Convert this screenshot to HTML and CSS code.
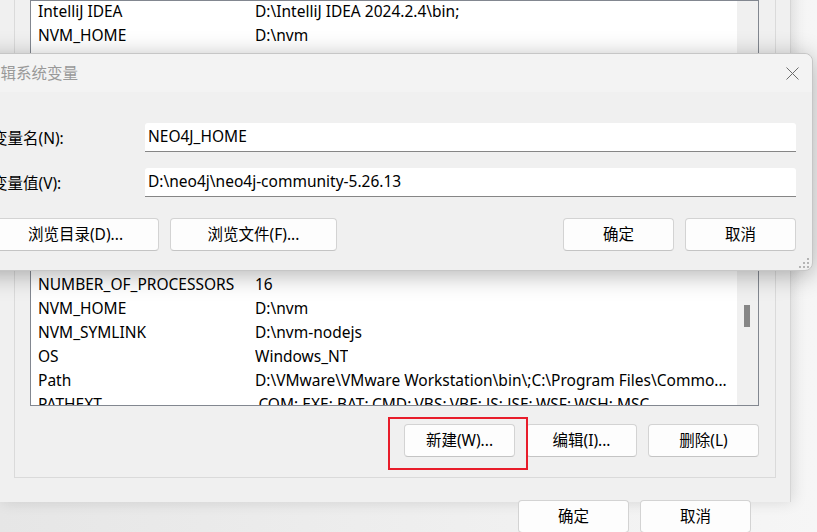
FILE: index.html
```html
<!DOCTYPE html>
<html lang="zh-CN">
<head>
    <meta charset="UTF-8">
    <meta name="viewport" content="width=device-width, initial-scale=1.0">
    <title>环境变量</title>
    <link rel="stylesheet" href="styles.css">
</head>
<body>
    <div class="desktop">
        <!-- Environment variables window (behind) -->
        <div class="envwin">
            <div class="group">
                <div class="varlist user">
                    <div class="rows">
                        <div class="row"><span class="name">IntelliJ IDEA</span><span class="value">D:\IntelliJ IDEA 2024.2.4\bin;</span></div>
                        <div class="row"><span class="name">NVM_HOME</span><span class="value">D:\nvm</span></div>
                        <div class="row"><span class="name">NVM_SYMLINK</span><span class="value">D:\nvm-nodejs</span></div>
                        <div class="row"><span class="name">OneDrive</span><span class="value">C:\Users\Administrator\OneDrive</span></div>
                        <div class="row"><span class="name">Path</span><span class="value">C:\Users\Administrator\AppData\Local\Microsoft\WindowsApps;</span></div>
                        <div class="row"><span class="name">TEMP</span><span class="value">C:\Users\Administrator\AppData\Local\Temp</span></div>
                    </div>
                    <div class="vscroll"></div>
                </div>

                <div class="varlist sys">
                    <div class="rows">
                        <div class="row"><span class="name">JAVA_HOME</span><span class="value">C:\Program Files\Java\jdk-17</span></div>
                        <div class="row"><span class="name">NEO4J_HOME</span><span class="value">D:\neo4j\neo4j-community-5.26.13</span></div>
                        <div class="row"><span class="name">NUMBER_OF_PROCESSORS</span><span class="value">16</span></div>
                        <div class="row"><span class="name">NVM_HOME</span><span class="value">D:\nvm</span></div>
                        <div class="row"><span class="name">NVM_SYMLINK</span><span class="value">D:\nvm-nodejs</span></div>
                        <div class="row"><span class="name">OS</span><span class="value">Windows_NT</span></div>
                        <div class="row"><span class="name">Path</span><span class="value">D:\VMware\VMware Workstation\bin\;C:\Program Files\Commo...</span></div>
                        <div class="row"><span class="name">PATHEXT</span><span class="value">.COM;.EXE;.BAT;.CMD;.VBS;.VBE;.JS;.JSE;.WSF;.WSH;.MSC</span></div>
                    </div>
                    <div class="vscroll"><div class="thumb"></div></div>
                </div>

                <div class="btnrow">
                    <button class="btn">新建(W)...</button>
                    <button class="btn">编辑(I)...</button>
                    <button class="btn">删除(L)</button>
                </div>
            </div>

            <div class="btnrow footer">
                <button class="btn">确定</button>
                <button class="btn">取消</button>
            </div>
        </div>

        <!-- red annotation box around the New button -->
        <div class="highlight"></div>

        <!-- Edit system variable dialog (on top) -->
        <div class="editdlg">
            <div class="titlebar">
                <span class="title">编辑系统变量</span>
                <span class="closebtn">
                    <svg width="13" height="13" viewBox="0 0 13 13">
                        <path d="M0.5 0.5 L12.5 12.5 M12.5 0.5 L0.5 12.5" stroke="#6b6b6b" stroke-width="1" fill="none"/>
                    </svg>
                </span>
            </div>
            <div class="dlgbody">
                <div class="field">
                    <label>变量名(N):</label>
                    <input class="input" value="NEO4J_HOME">
                </div>
                <div class="field">
                    <label>变量值(V):</label>
                    <input class="input" value="D:\neo4j\neo4j-community-5.26.13">
                </div>
                <div class="dlgbtns">
                    <button class="btn wide">浏览目录(D)...</button>
                    <button class="btn wide">浏览文件(F)...</button>
                    <button class="btn push">确定</button>
                    <button class="btn">取消</button>
                </div>
            </div>
            <svg class="grip" width="12" height="12" viewBox="0 0 12 12">
                <rect x="9" y="1" width="2" height="2" fill="#b4b4b4"/>
                <rect x="5" y="5" width="2" height="2" fill="#b4b4b4"/>
                <rect x="9" y="5" width="2" height="2" fill="#b4b4b4"/>
                <rect x="1" y="9" width="2" height="2" fill="#b4b4b4"/>
                <rect x="5" y="9" width="2" height="2" fill="#b4b4b4"/>
                <rect x="9" y="9" width="2" height="2" fill="#b4b4b4"/>
            </svg>
        </div>
    </div>
</body>
</html>
```

FILE: styles.css
```css
body {
    margin: 0;
    font-family: "Noto Sans", "Noto Sans CJK SC", sans-serif;
    font-size: 15.5px;
    color: #000;
    background: #f5f5f5;
}

.desktop {
    position: relative;
    width: 817px;
    height: 532px;
    overflow: hidden;
    background: linear-gradient(to right, #e6e6e6, #f6f6f6);
}

/* background window */
.envwin {
    width: 790px;
    height: 532px;
    background: #f0f0f0;
    border-right: 1px solid #d6d6d6;
    box-shadow: 2px 0 14px rgba(0, 0, 0, 0.12);
}

.group {
    width: 729px;
    margin: -30px 0 0 14px;
    padding: 29px 16px 20px 15px;
    border: 1px solid #dadada;
}

.varlist {
    display: flex;
    border: 1px solid #828790;
    background: #fff;
    overflow: hidden;
}

.varlist.user {
    height: 150px;
}

.varlist.sys {
    height: 179px;
    margin-top: 73px;
}

.rows {
    flex: 1;
    min-width: 0;
}

.row {
    display: flex;
    height: 24px;
    line-height: 20px;
    padding-left: 7px;
    white-space: nowrap;
}

.name {
    flex: none;
    width: 217px;
}

.value {
    overflow: hidden;
}

.vscroll {
    flex: none;
    width: 21px;
    background: #f0f0f0;
}

.thumb {
    width: 6px;
    height: 22px;
    margin: 79px 0 0 7px;
    background: #868686;
}

.btnrow {
    display: flex;
    justify-content: flex-end;
    gap: 11px;
    margin-top: 18px;
}

.btnrow.footer {
    margin-top: 22px;
    padding-right: 39px;
}

.btn {
    width: 111px;
    height: 33px;
    box-sizing: border-box;
    padding: 0 0 3px;
    background: #fdfdfd;
    border: 1px solid #d3d3d3;
    border-bottom-color: #c4c4c4;
    border-radius: 4px;
    font: inherit;
    color: #000;
}

.btn.wide {
    width: 167px;
}

.btn.push {
    margin-left: auto;
}

.highlight {
    position: absolute;
    left: 388px;
    top: 417px;
    width: 140px;
    height: 53px;
    box-sizing: border-box;
    border: 2px solid #e81c2a;
}

/* foreground dialog */
.editdlg {
    position: absolute;
    left: -30px;
    top: 53px;
    width: 843px;
    height: 218px;
    box-sizing: border-box;
    border: 1px solid #c6c6c6;
    border-radius: 8px;
    background: #f0f0f0;
    box-shadow: 0 4px 24px rgba(0, 0, 0, 0.3);
}

.titlebar {
    display: flex;
    align-items: center;
    height: 38px;
    padding-left: 14px;
    background: #f3f3f3;
    border-radius: 8px 8px 0 0;
    color: #999;
}

.title {
    flex: 1;
    padding-bottom: 2px;
}

.closebtn {
    display: flex;
    align-items: center;
    justify-content: center;
    width: 40px;
    height: 38px;
}

.dlgbody {
    padding: 31px 16px 0 21px;
}

.field {
    display: flex;
    align-items: center;
    height: 29px;
}

.field + .field {
    margin-top: 16px;
}

.field label {
    flex: none;
    width: 153px;
}

.input {
    flex: 1;
    height: 29px;
    box-sizing: border-box;
    padding: 0 0 3px 3px;
    background: #fff;
    border: none;
    border-bottom: 1px solid #868686;
    border-radius: 3px 3px 0 0;
    font: inherit;
    color: #000;
}

.dlgbtns {
    display: flex;
    gap: 11px;
    margin-top: 21px;
}

.grip {
    position: absolute;
    right: 2px;
    bottom: 1px;
}
```
